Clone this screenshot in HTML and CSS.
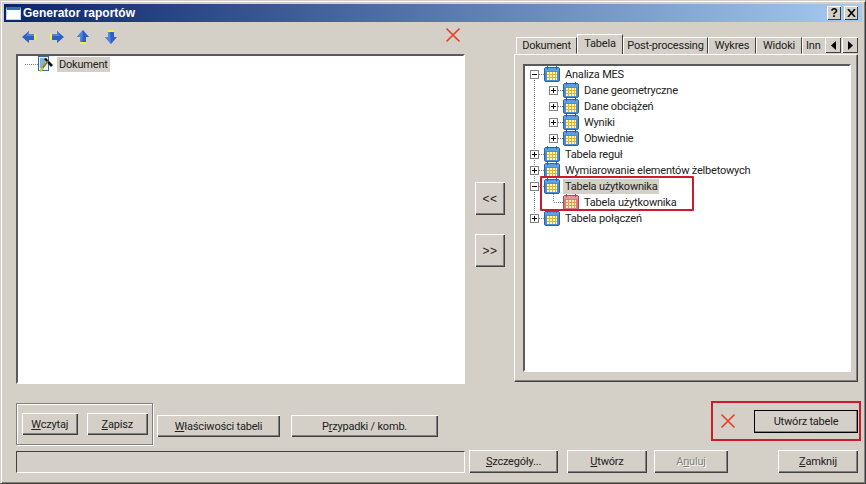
FILE: index.html
```html
<!doctype html>
<html lang="pl">
  <head>
    <meta charset="UTF-8" />
    <title>Generator raportów</title>
    <link rel="stylesheet" href="styles.css">
  </head>
  <body>
    <svg class="defs" width="0" height="0">
      <symbol id="tbl" viewBox="0 0 16 16">
        <rect x="0.500" y="1.500" width="15" height="14" rx="1.500" fill="#4a8fd6" stroke="#2a62a8"/>
        <rect x="1" y="2" width="14" height="3" fill="#5aa0e4"/>
        <path d="M3.500 0v3M12.500 0v3" stroke="#2a62a8"/>
        <rect x="3" y="6" width="10" height="8" fill="#fff8c0"/>
        <path d="M3 8.500h10M3 11.500h10M5.500 6v8M8.500 6v8M11.500 6v8" stroke="#e2b52e"/>
      </symbol>
      <symbol id="tbl-red" viewBox="0 0 16 16">
        <rect x="0.500" y="1.500" width="15" height="14" rx="1.500" fill="#dc7a82" stroke="#b04854"/>
        <rect x="1" y="2" width="14" height="3" fill="#e8939b"/>
        <path d="M3.500 0v3M12.500 0v3" stroke="#b04854"/>
        <rect x="3" y="6" width="10" height="8" fill="#fdf0c4"/>
        <path d="M3 8.500h10M3 11.500h10M5.500 6v8M8.500 6v8M11.500 6v8" stroke="#e0a050"/>
      </symbol>
      <symbol id="redx" viewBox="0 0 16 16">
        <path d="M1.500 1.500l13 13M14.500 1.500l-13 13" stroke="#e8402a" stroke-width="1.700" fill="none"/>
      </symbol>
    </svg>

    <div class="window">
      <div class="titlebar">
        <span class="app-icon"></span>
        <span class="title">Generator raportów</span>
        <span class="cap-btn cap-help">?</span>
        <span class="cap-btn cap-close">
          <svg width="9" height="8" viewBox="0 0 9 8"><path d="M1 0l7 8M8 0l-7 8" stroke="#000" stroke-width="1.600"/></svg>
        </span>
      </div>

      <div class="main">
        <div class="left">
          <div class="toolbar">
            <svg class="arrow a-left" width="14" height="12" viewBox="0 0 14 12"><path d="M0 6l7-6v3h5v6h-5v3z" fill="#2f5fc4"/><path d="M7 0v3h5v2h-8z" fill="#4f86e0"/><rect x="12" y="3" width="2" height="6" fill="#f4f03c"/></svg>
            <svg class="arrow a-right" width="14" height="12" viewBox="0 0 14 12"><path d="M14 6l-7-6v3h-5v6h5v3z" fill="#2f5fc4"/><path d="M7 0v3h-5v2h8z" fill="#4f86e0"/><rect x="0" y="3" width="2" height="6" fill="#f4f03c"/></svg>
            <svg class="arrow a-up" width="12" height="14" viewBox="0 0 12 14"><path d="M6 0l6 7h-3v5h-6v-5h-3z" fill="#2f5fc4"/><path d="M6 0l-6 7h3v5h2z" fill="#4f86e0"/><rect x="3" y="12" width="6" height="2" fill="#f4f03c"/></svg>
            <svg class="arrow a-down" width="12" height="14" viewBox="0 0 12 14"><path d="M6 14l6-7h-3v-5h-6v5h-3z" fill="#2f5fc4"/><path d="M6 14l-6-7h3v-5h2z" fill="#4f86e0"/><rect x="3" y="0" width="6" height="2" fill="#f4f03c"/></svg>
            <svg class="tool-x" width="16" height="16"><use href="#redx"/></svg>
          </div>
          <div class="tree doc-tree">
            <div class="row">
              <span class="dots"></span>
              <svg class="ico" width="16" height="16" viewBox="0 0 16 16">
                <rect x="0.500" y="0.500" width="10" height="14" fill="#e4f2fb" stroke="#2f6d9c"/>
                <path d="M2 3h7M2 5h6M2 7h5M2 9h4M2 11h3" stroke="#2f6d9c"/>
                <path d="M6 3l2-1 7 7-2 2z" fill="#111"/>
                <path d="M10 5l-7 9" stroke="#8a7a1c" stroke-width="2"/>
                <path d="M2 15.500l3-3.500" stroke="#d8c820" stroke-width="2"/>
              </svg>
              <span class="label sel">Dokument</span>
            </div>
          </div>
        </div>

        <div class="middle">
          <button class="btn move">&lt;&lt;</button>
          <button class="btn move">&gt;&gt;</button>
        </div>

        <div class="right">
          <div class="tabs">
            <span class="tab tab-doc">Dokument</span>
            <span class="tab active">Tabela</span>
            <span class="tab tab-post">Post-processing</span>
            <span class="tab tab-wyk">Wykres</span>
            <span class="tab tab-wid">Widoki</span>
            <span class="tab tab-inn">Inn</span>
            <span class="scroll">
              <span class="scroll-btn"><svg width="5" height="9"><path d="M5 0v9l-5-4.500z" fill="#000"/></svg></span>
              <span class="scroll-btn"><svg width="5" height="9"><path d="M0 0v9l5-4.500z" fill="#000"/></svg></span>
            </span>
          </div>
          <div class="panel">
            <div class="tree table-tree">
              <div class="row"><span class="cell v-low hl"><i class="box minus"></i></span><svg class="ico" width="16" height="16"><use href="#tbl"/></svg><span class="label">Analiza MES</span></div>
              <div class="row"><span class="cell v"></span><span class="cell hl"><i class="box plus"></i></span><svg class="ico" width="16" height="16"><use href="#tbl"/></svg><span class="label">Dane geometryczne</span></div>
              <div class="row"><span class="cell v"></span><span class="cell hl"><i class="box plus"></i></span><svg class="ico" width="16" height="16"><use href="#tbl"/></svg><span class="label">Dane obciążeń</span></div>
              <div class="row"><span class="cell v"></span><span class="cell hl"><i class="box plus"></i></span><svg class="ico" width="16" height="16"><use href="#tbl"/></svg><span class="label">Wyniki</span></div>
              <div class="row"><span class="cell v"></span><span class="cell hl"><i class="box plus"></i></span><svg class="ico" width="16" height="16"><use href="#tbl"/></svg><span class="label">Obwiednie</span></div>
              <div class="row"><span class="cell v hl"><i class="box plus"></i></span><svg class="ico" width="16" height="16"><use href="#tbl"/></svg><span class="label">Tabela reguł</span></div>
              <div class="row"><span class="cell v hl"><i class="box plus"></i></span><svg class="ico" width="16" height="16"><use href="#tbl"/></svg><span class="label">Wymiarowanie elementów żelbetowych</span></div>
              <div class="row"><span class="cell v hl"><i class="box minus"></i></span><svg class="ico" width="16" height="16"><use href="#tbl"/></svg><span class="label sel">Tabela użytkownika</span></div>
              <div class="row"><span class="cell v"></span><span class="cell elbow"></span><svg class="ico" width="16" height="16"><use href="#tbl-red"/></svg><span class="label">Tabela użytkownika</span></div>
              <div class="row"><span class="cell v-high hl"><i class="box plus"></i></span><svg class="ico" width="16" height="16"><use href="#tbl"/></svg><span class="label">Tabela połączeń</span></div>
              <div class="mark"></div>
            </div>
          </div>
        </div>
      </div>

      <div class="bottom-row">
        <div class="group">
          <button class="btn b-load"><u>W</u>czytaj</button>
          <button class="btn b-save"><u>Z</u>apisz</button>
        </div>
        <button class="btn b-props"><u>W</u>łaściwości tabeli</button>
        <button class="btn b-cases">P<u>r</u>zypadki / komb.</button>
        <div class="callout">
          <svg width="16" height="16"><use href="#redx"/></svg>
          <button class="btn b-make">Utwórz tabele</button>
        </div>
      </div>

      <div class="status-row">
        <div class="status"></div>
        <button class="btn b-details"><u>S</u>zczegóły...</button>
        <button class="btn b-create"><u>U</u>twórz</button>
        <button class="btn b-cancel" disabled>A<u>n</u>uluj</button>
        <button class="btn b-close"><u>Z</u>amknij</button>
      </div>
    </div>
  </body>
</html>
```

FILE: styles.css
```css
body { margin: 0; overflow: hidden; background-color: #d4d0c8; font-family: Roboto, "Liberation Sans", Arial, sans-serif; font-size: 11px; letter-spacing: -0.2px; color: #222; }
.defs { display: block; height: 0; }

/* --- Window --- */
.window {
  box-sizing: border-box;
  width: 866px;
  height: 484px;
  padding: 3px;
  border: 1px solid;
  border-color: #d4d0c8 #404040 #404040 #d4d0c8;
  box-shadow: inset 1px 1px 0 #fff, inset -1px -1px 0 #808080;
  background-color: #d4d0c8;
}
.titlebar {
  display: flex;
  align-items: center;
  height: 18px;
  padding: 0 4px 0 2px;
  background: linear-gradient(to right, #0a246a, #a6caf0);
  color: white;
}
.app-icon {
  box-sizing: border-box;
  width: 15px;
  height: 13px;
  border: 1px solid #c8d4e8;
  border-top: 3px solid #3a6ea5;
  background-color: white;
}
.title { margin-left: 2px; font-family: "Liberation Sans", Arial, sans-serif; font-weight: bold; font-size: 12px; letter-spacing: 0; flex: 1; }
.cap-btn {
  box-sizing: border-box;
  display: flex;
  align-items: center;
  justify-content: center;
  width: 14px;
  height: 14px;
  background-color: #d4d0c8;
  color: black;
  font-family: "Liberation Sans", Arial, sans-serif;
  font-weight: bold;
  font-size: 12px;
  box-shadow: inset 1px 1px 0 #fff, inset -1px -1px 0 #404040;
}
.cap-close { margin-left: 3px; }

/* --- Main area --- */
.main { display: flex; margin-left: 12px; height: 362px; }
.left { width: 449px; }
.toolbar { box-sizing: border-box; display: flex; align-items: center; height: 32px; padding: 0 4px 3px 6px; }
.a-right { margin-left: 14px; }
.a-up { margin-left: 13px; }
.a-down { margin-left: 16px; }
.tool-x { margin-left: auto; margin-bottom: 3px; }

.tree {
  box-sizing: border-box;
  position: relative;
  border: 2px solid;
  border-color: #5a5a5a #fff #fff #5a5a5a;
  background-color: white;
  overflow: hidden;
}
.doc-tree { height: 330px; }
.row { display: flex; align-items: center; height: 16px; white-space: nowrap; }
.dots {
  width: 13px;
  height: 1px;
  margin-left: 7px;
  background: repeating-linear-gradient(to right, #808080 0 1px, transparent 1px 2px);
}
.ico { flex: none; }
.label { margin-left: 3px; padding: 0 2px; line-height: 15px; }
.sel { background-color: #d4d0c8; }

/* --- Tree cells (dotted guides) --- */
.cell {
  display: flex;
  align-items: center;
  width: 19px;
  height: 16px;
  flex: none;
  background-repeat: no-repeat;
}
.v { background-image: repeating-linear-gradient(to bottom, #808080 0 1px, transparent 1px 2px); background-size: 1px 16px; background-position: 9px 0; }
.v-low { background-image: repeating-linear-gradient(to bottom, #808080 0 1px, transparent 1px 2px); background-size: 1px 8px; background-position: 9px 8px; }
.v-high { background-image: repeating-linear-gradient(to bottom, #808080 0 1px, transparent 1px 2px); background-size: 1px 8px; background-position: 9px 0; }
.hl, .elbow { position: relative; }
.hl::after, .elbow::after {
  content: "";
  position: absolute;
  left: 10px;
  top: 8px;
  width: 9px;
  height: 1px;
  background: repeating-linear-gradient(to right, #808080 0 1px, transparent 1px 2px);
}
.elbow { background-image: repeating-linear-gradient(to bottom, #808080 0 1px, transparent 1px 2px); background-size: 1px 8px; background-position: 9px 0; }
.box {
  box-sizing: border-box;
  display: block;
  position: relative;
  z-index: 1;
  width: 9px;
  height: 9px;
  margin-left: 5px;
  border: 1px solid #808080;
  background-color: white;
  background-repeat: no-repeat;
}
.minus { background-image: linear-gradient(#000, #000); background-size: 5px 1px; background-position: 1px 3px; }
.plus {
  background-image: linear-gradient(#000, #000), linear-gradient(#000, #000);
  background-size: 5px 1px, 1px 5px;
  background-position: 1px 3px, 3px 1px;
}

/* --- Annotation around the user table --- */
.mark {
  position: absolute;
  left: 15px;
  top: 110px;
  width: 150px;
  height: 31px;
  border: 2px solid #cc1c2c;
  border-radius: 1px;
}

/* --- Buttons --- */
.btn {
  box-sizing: border-box;
  height: 22px;
  padding: 0;
  border: 0;
  background-color: #d4d0c8;
  font-family: inherit;
  font-size: 11px;
  letter-spacing: -0.2px;
  color: #222;
  box-shadow: inset 1px 1px 0 #fff, inset -1px -1px 0 #404040, inset -2px -2px 0 #808080;
}
.btn:disabled { color: #808080; text-shadow: 1px 1px 0 #fff; }

.middle { display: flex; flex-direction: column; gap: 19px; width: 30px; margin: 160px 9px 0 10px; }
.move { width: 30px; height: 33px; font-family: "Liberation Sans", Arial, sans-serif; font-size: 12px; letter-spacing: 0.5px; }

/* --- Tabs --- */
.right { width: 344px; padding-top: 12px; }
.tabs { display: flex; align-items: flex-end; height: 20px; overflow: hidden; padding-left: 2px; }
.tab {
  box-sizing: border-box;
  height: 17px;
  line-height: 16px;
  text-align: center;
  white-space: nowrap;
  border: 1px solid #808080;
  border-color: #fff #404040 transparent #fff;
  flex: none;
}
.tab-doc { width: 61px; }
.active { width: 46px; height: 20px; line-height: 17px; border-bottom: 0; }
.tab-post { width: 85px; }
.tab-wyk { width: 48px; }
.tab-wid { width: 46px; }
.tab-inn { width: 23px; text-align: left; padding-left: 3px; overflow: hidden; border-right: 0; }
.scroll { display: flex; gap: 1px; margin-bottom: 1px; flex: none; }
.scroll-btn {
  box-sizing: border-box;
  display: flex;
  align-items: center;
  justify-content: center;
  width: 16px;
  height: 16px;
  background-color: #d4d0c8;
  box-shadow: inset 1px 1px 0 #fff, inset -1px -1px 0 #404040;
}
.panel {
  box-sizing: border-box;
  height: 328px;
  padding: 9px 6px 9px 8px;
  border: 1px solid;
  border-color: #fff #404040 #404040 #fff;
  box-shadow: inset -1px -1px 0 #808080;
}
.table-tree { height: 100%; }

/* --- Bottom rows --- */
.bottom-row { display: flex; align-items: flex-start; height: 44px; margin: 17px 1px 0 12px; }
.group {
  box-sizing: border-box;
  display: flex;
  align-items: center;
  gap: 9px;
  width: 137px;
  height: 42px;
  margin-top: 2px;
  padding: 0 4px 0 5px;
  border: 1px solid #808080;
  box-shadow: 1px 1px 0 #fff, inset 1px 1px 0 #fff;
}
.bottom-row > .btn { margin-top: 14px; }
.b-load { width: 56px; }
.b-save { width: 62px; }
.bottom-row > .b-props { width: 123px; margin-left: 4px; }
.bottom-row > .b-cases { width: 147px; margin-left: 11px; }
.callout {
  box-sizing: border-box;
  display: flex;
  align-items: center;
  width: 150px;
  height: 40px;
  margin-left: auto;
  padding: 0 1px 0 7px;
  border: 2px solid #cc1c2c;
}
.b-make {
  width: 104px;
  height: 23px;
  margin-left: auto;
  outline: 1px solid #000;
  outline-offset: -1px;
}

.status-row { display: flex; align-items: flex-start; margin: 6px 4px 0 12px; }
.status {
  box-sizing: border-box;
  width: 449px;
  height: 22px;
  border: 1px solid;
  border-color: #404040 #fff #fff #404040;
}
.status-row .btn { height: 23px; margin-top: -1px; }
.b-details { width: 89px; margin-left: 4px; }
.b-create { width: 80px; margin-left: 9px; }
.b-cancel { width: 74px; margin-left: 7px; }
.b-close { width: 80px; margin-left: 50px; }
```
